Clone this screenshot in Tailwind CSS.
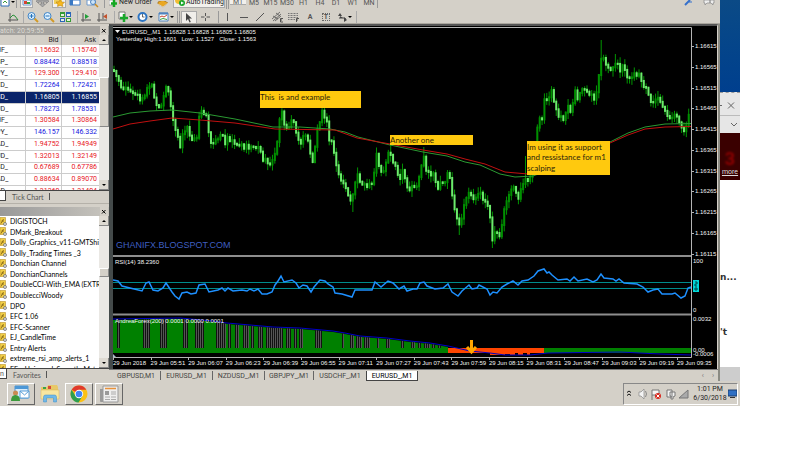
<!DOCTYPE html>
<html lang="en">

<head>
	<meta charset="UTF-8">
	<meta name="viewport" content="width=device-width, initial-scale=1.0">
	<title>EURUSD_,M1</title>
	<script src="https://cdn.jsdelivr.net/npm/@tailwindcss/browser@4"></script>
</head>

<body class="bg-white pr-[60px] font-['Roboto','Liberation_Sans',sans-serif] text-[7px] leading-[10px] text-[#222]">
	<div class="flex">
		<!-- TERMINAL WINDOW -->
		<div class="flex-1 min-w-0 bg-[#d4d0c8]">
			<header class="h-6 overflow-hidden border-b border-[#aaa69e]">
				<!-- standard toolbar -->
				<div class="flex h-[10px] items-start leading-[4px] whitespace-nowrap">
					<button aria-label="New chart" class="w-4"><svg class="w-4 h-2" viewBox="0 0 16 8"><path d="M1 0v6h8V0" fill="#fff" stroke="#2d6db8" /><path d="M3 3l2-2 2 2" stroke="#3a9a3a" fill="none" /><path d="M11 1h4l-2 2z" /></svg></button>
					<span class="w-1 h-2 border-l border-[#999]"></span>
					<button aria-label="Market watch" class="w-[13px] h-2 bg-[#f2f0ec] border border-[#aaa] border-t-0"><svg class="w-3 h-[7px]" viewBox="0 0 12 7"><path d="M2 0h8v5H2z" fill="#fff" stroke="#6a93c8" /><path d="M3 1h3v3H3z" fill="#d8432e" /><path d="M6 2h3v2H6z" fill="#35a043" /></svg></button>
					<button aria-label="Data window" class="w-[19px] h-2"><svg class="w-[19px] h-2" viewBox="0 0 19 8"><path d="M9.500 7L6.500 4h2V2h-3v1.500L3 1l2-1h9l2 1-2.500 2.500V2h-3v2h2z" fill="#aaa" stroke="#777" stroke-width=".6" /></svg></button>
					<button aria-label="Navigator" class="w-[14px] h-2 bg-[#f2f0ec] border border-[#aaa] border-t-0"><svg class="w-3 h-[7px]" viewBox="0 0 12 7"><path d="M1 0h8v4H1z" fill="#f1cf5a" /><path d="M7 0l1.500 2 3 .2-2 2 .4 2.300L7 5.500 4.500 6.500l.3-2.300L3 2l3-.2z" fill="#f8b81e" stroke="#ad7c10" stroke-width=".5" /></svg></button>
					<button aria-label="Terminal" class="w-[18px] h-2"><svg class="w-[18px] h-2" viewBox="0 0 18 8"><path d="M4 0h10v5H4z" fill="#fff" stroke="#3a79c4" /><path d="M4 0h3v5H4z" fill="#3a79c4" /></svg></button>
					<button aria-label="Strategy tester" class="w-4 h-2"><svg class="w-4 h-2" viewBox="0 0 16 8"><path d="M3 0h8v5H3z" fill="#fff" stroke="#6d98cc" /><circle cx="9" cy="2" r="2.500" fill="#cce4f8" stroke="#4a82c0" /><path d="M11 4l3 3" stroke="#c98b22" stroke-width="1.500" /></svg></button>
					<span class="w-[5px] ml-1 h-2 border-l border-[#999]"></span>
					<button class="flex w-12 text-[7px]"><svg class="w-[9px] h-2 mr-px shrink-0" viewBox="0 0 9 8"><path d="M0 0h5v5H0z" fill="#fff" stroke="#666" stroke-width=".5" /><path d="M5 0v7M2 3.500h6" stroke="#14a822" stroke-width="2.500" /></svg>New Order</button>
					<button aria-label="MetaEditor" class="w-[12px] h-2"><svg class="w-3 h-[7px]" viewBox="0 0 12 7"><path d="M1 1l5-2 5 3-5 4-5-3z" fill="#e9a722" stroke="#92600a" stroke-width=".6" /><path d="M1 3l5 3 5-4" fill="none" stroke="#fff" stroke-width=".6" /></svg></button>
					<button class="flex w-[52px] h-2 pl-px ml-1 text-[7px] bg-[#f2f0ec] border border-t-0 border-[#aaa]"><svg class="w-[10px] h-[7px] mr-px shrink-0" viewBox="0 0 10 7"><circle cx="4" cy="0" r="4" fill="#f0bd34" /><circle cx="7" cy="3" r="3" fill="#19a52b" /><path d="M6 1.500l3 1.500-3 1.500z" fill="#fff" /></svg>AutoTrading</button>
					<span class="w-[3px] h-[9px] ml-px mr-px border-x border-[#999]"></span>
					<nav class="flex text-[#555]">
						<button class="w-4 h-[5px] bg-[#f2f0ec] border-b border-[#aaa]">M1</button>
						<button class="w-4">M5</button>
						<button class="w-[17px]">M15</button>
						<button class="w-4">M30</button>
						<button class="w-[17px]">H1</button>
						<button class="w-4">H4</button>
						<button class="w-4">D1</button>
						<button class="w-[17px]">W1</button>
						<button class="w-4">MN</button>
					</nav>
					<span class="h-2 border-l border-[#999]"></span>
					<span class="flex ml-auto mr-[5px] gap-2">
						<svg class="w-3 h-2" viewBox="0 0 12 8"><path d="M2 5l5-5" stroke="#3470cc" stroke-width="2" /><path d="M6 2h3" stroke="#3470cc" /></svg>
						<svg class="w-3 h-2" viewBox="0 0 12 8"><path d="M1 0h6v3H4L2 5V3H1zM7 0h4v3h-1v2L8 3H7z" fill="#eee" stroke="#888" stroke-width=".7" /></svg>
					</span>
				</div>
				<!-- charts and line studies toolbar -->
				<div class="flex h-[14px] items-center pl-[5px]">
					<button aria-label="Line chart" class="w-4"><svg class="size-4" viewBox="0 0 16 16"><path d="M5 4v9M3 11h10" stroke="#555" /><path d="M5 9l3-3 2 1 3 4" stroke="#289238" fill="none" /></svg></button>
					<span class="w-[3px] h-3 border-r border-[#aaa]"></span>
					<button aria-label="Zoom in" class="w-4"><svg class="size-4" viewBox="0 0 16 16"><path d="M10 9l4 4" stroke="#d39a25" stroke-width="2" /><circle cx="7.500" cy="7" r="3.500" fill="#dcf0ff" stroke="#3f84c6" /><path d="M5.500 7h4M7.500 5v4" stroke="#2672b8" /></svg></button>
					<button aria-label="Zoom out" class="w-[17px]"><svg class="size-4" viewBox="0 0 16 16"><path d="M10 9l4 4" stroke="#d39a25" stroke-width="2" /><circle cx="7.500" cy="7" r="3.500" fill="#dcf0ff" stroke="#3f84c6" /><path d="M5.500 7h4" stroke="#2672b8" /></svg></button>
					<button aria-label="Tile windows" class="w-4"><svg class="size-4" viewBox="0 0 16 16"><path d="M3 3h5v5H3zM9 9h5v4H9z" fill="#359b35" /><path d="M9 3h5v5H9zM3 9h5v4H3z" fill="#2b66b8" /><path d="M4 5h3v2H4zM10 5h3v2h-3zM4 10h3v2H4zM10 10h3v2h-3z" fill="#e8f0e0" /></svg></button>
					<span class="w-[5px] h-3 border-r border-[#aaa]"></span>
					<button aria-label="Auto scroll" class="w-4"><svg class="size-4" viewBox="0 0 16 16"><path d="M5 4v9M3 11h10" stroke="#555" /><path d="M7 5l4 2.500L7 10z" fill="#21a038" /></svg></button>
					<button aria-label="Chart shift" class="w-4"><svg class="size-4" viewBox="0 0 16 16"><path d="M5 4v9M3 11h10M9 4v6" stroke="#555" /><path d="M13 5l-4 2.500L13 10z" fill="#c4532d" /></svg></button>
					<span class="w-[5px] h-3 border-r border-[#aaa]"></span>
					<button aria-label="Indicators" class="w-5"><svg class="w-5 h-4" viewBox="0 0 20 16"><path d="M4 3h6v7H4z" fill="#fff" stroke="#777" /><path d="M9 5v8M5 9h8" stroke="#18a82b" stroke-width="2.500" /><path d="M14 7h4l-2 2z" /></svg></button>
					<button aria-label="Periods" class="w-5"><svg class="w-5 h-4" viewBox="0 0 20 16"><circle cx="7.500" cy="8" r="4" fill="#fff" stroke="#2c74c2" stroke-width="2" /><path d="M7.500 5v3h2" fill="none" stroke="#444" stroke-width=".8" /><path d="M14 7h4l-2 2z" /></svg></button>
					<button aria-label="Templates" class="w-5"><svg class="w-5 h-4" viewBox="0 0 20 16"><path d="M4 4h9v8H4z" fill="#fff" stroke="#4e83be" /><path d="M4 4.500h9" stroke="#4e83be" stroke-width="2" /><path d="M5 8l2-1 2 1 3-2" stroke="#c4482f" fill="none" /><path d="M5 10.500l3-1 4 1" stroke="#35a043" fill="none" /><path d="M15 7h4l-2 2z" /></svg></button>
					<span class="w-[3px] h-3 ml-[2px] mr-px border-x border-[#999]"></span>
					<button aria-label="Cursor" class="w-4 h-[13px] bg-[#f0eeea] border border-[#aaa]"><svg class="w-[14px] h-3" viewBox="0 0 14 12"><path d="M4 1v8l2-2 1.500 3.500 1.300-.6L7.300 6.500H10z" fill="#444" /></svg></button>
					<button aria-label="Crosshair" class="w-[17px]"><svg class="w-[17px] h-4" viewBox="0 0 17 16"><path d="M8.500 4v3M8.500 9v3M4 8h3.500M9.500 8H13" stroke="#555" /></svg></button>
					<span class="w-[5px] h-3 mr-px border-r border-[#999]"></span>
					<button aria-label="Vertical line" class="w-4"><svg class="size-4" viewBox="0 0 16 16"><path d="M7.500 4v8" stroke="#555" /></svg></button>
					<button aria-label="Horizontal line" class="w-4"><svg class="size-4" viewBox="0 0 16 16"><path d="M4 8.500h8" stroke="#555" /></svg></button>
					<button aria-label="Trend line" class="w-[17px]"><svg class="size-4" viewBox="0 0 16 16"><path d="M4 12l8-8" stroke="#555" /></svg></button>
					<button aria-label="Channel" class="w-4"><svg class="size-4" viewBox="0 0 16 16"><path d="M3 10l8-7M4 12l8-7M6 12l6-5M4 7l5 3M7 4l4 3" stroke="#555" stroke-width=".8" /><path d="M14 9.500h-2.500v3.500H14M11.500 11H13" stroke="#333" fill="none" stroke-width=".8" /></svg></button>
					<button aria-label="Fibonacci" class="w-[17px]"><svg class="size-4" viewBox="0 0 16 16"><path d="M3 4.500h10M3 6.500h10M3 8.500h10M3 10.500h7" stroke="#777" stroke-dasharray="1 .5" /><path d="M11.500 13v-3.500H14M11.500 11H13" stroke="#333" fill="none" stroke-width=".8" /></svg></button>
					<button aria-label="Text" class="w-4 font-bold text-[#555]">A</button>
					<button aria-label="Text label" class="w-4 flex justify-center"><span class="w-2 h-2 border border-dotted border-[#666] leading-[6px] font-bold text-[#555]">T</span></button>
					<button aria-label="Arrows" class="w-5"><svg class="w-5 h-4" viewBox="0 0 20 16"><path d="M6 4l2 3H4zM6 7v2h3M10 8v5l3-2z" fill="#444" /><path d="M5 9h5l2 1" stroke="#444" fill="none" /><path d="M14 7h4l-2 2z" /></svg></button>
					<span class="w-px h-3 ml-[2px] bg-[#aaa]"></span>
				</div>
			</header>

			<div class="flex">
				<!-- SIDE PANELS -->
				<aside class="w-[109px] shrink-0">
					<section>
						<h2 class="h-[9px] mt-[2px] flex justify-between items-center bg-[#a5a39f] text-[#dedbd4] overflow-hidden whitespace-nowrap">
							<span>atch: 20:59:55</span>
							<button aria-label="Close market watch" class="w-2 bg-[#d4d0c8] mr-px"><svg class="w-2 h-[9px]" viewBox="0 0 8 9"><path d="M2 3l3.500 3.500M5.500 3L2 6.500" stroke="#000" /></svg></button>
						</h2>
						<div class="flex h-[156px] border-b border-[#444]">
							<div class="flex-1 overflow-hidden bg-white">
								<table class="w-full h-[163px] table-fixed leading-[9px]">
									<thead class="bg-[#d4d0c8]">
										<tr class="h-[10px] text-right">
											<th class="w-[25px]"><span class="sr-only">Symbol</span></th>
											<th class="w-9 pr-[2px] font-normal border-l border-[#aaa]">Bid</th>
											<th class="pr-[3px] font-normal border-l border-[#aaa]">Ask</th>
										</tr>
									</thead>
									<tbody id="quotes"></tbody>
								</table>
							</div>
							<div class="w-[10px] flex flex-col justify-between bg-[#eae8e4]">
								<svg class="w-[10px] h-[10px]" viewBox="0 0 10 10"><path d="M0 0h10v10H0z" fill="#888" /><path d="M0 0h9v9H0z" fill="#dedad2" /><path d="M3 6h4L5 4z" /></svg>
								<span class="h-[50px] mt-8 bg-[#d4d0c8] border border-l-white border-t-white border-r-[#888] border-b-[#888]"></span>
								<svg class="w-[10px] h-[10px] mt-auto" viewBox="0 0 10 10"><path d="M0 0h10v10H0z" fill="#888" /><path d="M0 0h9v9H0z" fill="#dedad2" /><path d="M3 4h4L5 6z" /></svg>
							</div>
						</div>
						<nav class="flex h-[11px] text-[#555]">
							<button class="w-[6px] h-[10px] mr-[6px] bg-white border-r border-b border-[#444]" aria-label="Symbols"></button>
							<button class="font-['Lato']">Tick Chart</button>
							<span class="h-[7px] mt-[2px] ml-[5px] w-px bg-[#555]"></span>
						</nav>
					</section>

					<section class="pt-[3px] mt-px border-t border-[#b5b1a9]">
						<h2 class="h-[9px] flex justify-end items-center bg-linear-to-r from-[#999] to-[#c8c5be]">
							<button aria-label="Close navigator" class="w-2 h-[9px] bg-[#d4d0c8] mr-px"><svg class="w-2 h-[9px]" viewBox="0 0 8 9"><path d="M2 3l3.500 3.500M5.500 3L2 6.500" stroke="#000" /></svg></button>
						</h2>
						<div class="flex h-[153px] border-b border-[#444]">
							<ul id="indicators" class="flex-1 min-w-0 h-[152px] overflow-hidden bg-white font-['Lato'] text-black"></ul>
							<div class="w-[10px] flex flex-col bg-[#eae8e4]">
								<svg class="w-[10px] h-[10px]" viewBox="0 0 10 10"><path d="M0 0h10v10H0z" fill="#888" /><path d="M0 0h9v9H0z" fill="#dedad2" /><path d="M3 6h4L5 4z" /></svg>
								<span class="h-[9px] mt-[42px] bg-[#d4d0c8] border border-l-white border-t-white border-r-[#888] border-b-[#888]"></span>
								<svg class="w-[10px] h-[10px] mt-auto" viewBox="0 0 10 10"><path d="M0 0h10v10H0z" fill="#888" /><path d="M0 0h9v9H0z" fill="#dedad2" /><path d="M3 4h4L5 6z" /></svg>
							</div>
						</div>
						<nav class="flex h-3 text-[#555]">
							<button class="w-[7px] h-[10px] mr-[6px] bg-white border-r border-b border-[#444] text-left">n</button>
							<button class="font-['Lato']">Favorites</button>
							<span class="h-[7px] mt-[2px] ml-[5px] w-px bg-[#555]"></span>
						</nav>
					</section>
				</aside>

				<!-- CHART -->
				<main class="flex-1 min-w-0 border-r-2 border-[#8b8b83]">
					<div class="border-l-4 border-r border-t-2 border-l-[#444a4a] border-r-[#d4d0c8] border-t-[#555] bg-black">
						<svg id="chart" class="block w-full h-auto font-['Liberation_Sans'] text-[6px]" viewBox="113 26 604 343" fill="#f4f4f4">
							<path d="M113 27.500h578.500v330M113 357.500h578.500" fill="none" stroke="#b4b4b4" />
							<path d="M113 256h578M113 314.500h578" stroke="#8e8e8e" stroke-width="2" />
							<text x="116" y="248" class="text-[9px]" fill="#3f5fc0">GHANIFX.BLOGSPOT.COM</text>
							<g id="candles"></g>
							<path d="M113 117L130 113 150 111 172 110 200 113 235 119 273 127 300 127 330 129 345 132 358 137 390 145 423 152 447 156 465 162 480 165 500 174 515 177 533 176 570 162 610 142 628 133 645 127 665 124 691 123.500" fill="none" stroke="#2a9a32" />
							<path d="M113 129L130 124 150 121 172 118 200 120 235 123 275 129 335 130 357 138 390 144 423 150 447 154 465 159 485 164 505 172 528 174 570 164 610 143 628 135 645 129 665 127 691 126.500" fill="none" stroke="#c01010" />
							<path d="M115 30h5l-2.500 3z" />
							<text x="122" y="34">EURUSD_,M1&#160; 1.16828 1.16828 1.16805 1.16805</text>
							<text x="116" y="41">Yesterday High:1.1601&#160;&#160; Low: 1.1527&#160;&#160; Close: 1.1563</text>
							<!-- notes -->
							<g class="font-['Lato'] text-[8px]">
								<path d="M260 91h101v17H260zM390 135h83v10h-83zM527 141h83v34h-83z" fill="#ffc90e" />
								<g fill="#2c240a">
									<text x="260" y="100">This&#160; is and example</text>
									<text x="390" y="143">Another one</text>
									<text x="527" y="150">Im using it as support</text>
									<text x="527" y="160">and ressistance for m1</text>
									<text x="527" y="171">scalping</text>
								</g>
							</g>
							<!-- RSI window -->
							<path d="M113 282.500h578M113 288.500h578" stroke="#008b8b" />
							<polyline fill="none" stroke="#1e90ff" stroke-width="1.500" points="113,280 118,281 122,286 130,288 142,291 146,283 149,282 153,290 158,291 163,288 166,283 172,292 175,296 179,299 182,293 187,292 191,294 196,293 199,285 205,284 209,292 218,290 222,288 225,291 228,288 233,291 242,290 247,291 250,289 254,291 258,289 262,294 267,294 272,292 275,285 278,281 281,276 284,282 292,280 296,283 299,288 303,285 307,286 311,292 314,287 320,280 325,281 328,284 333,287 335,293 342,294 352,297 355,290 372,290 375,282 381,287 388,281 393,283 399,289 404,286 407,291 413,289 417,289 420,283 424,282 427,286 435,289 443,288 448,284 452,292 458,296 462,291 469,285 472,289 477,288 479,285 487,289 490,295 493,292 497,293 502,287 507,284 513,281 518,285 522,281 528,280 534,276 538,271 544,269 547,273 549,272 552,275 558,280 567,279 570,281 574,277 578,281 587,279 593,282 597,280 601,274 604,278 613,279 616,281 619,279 624,283 637,284 643,287 648,292 653,290 658,289 662,294 672,294 675,293 681,298 685,296 688,288 691,287" />
							<text x="115" y="264">RSI(14) 38.2360</text>
							<text x="693" y="263">100</text>
							<text x="693" y="312">0</text>
							<path d="M693 280h6v12h-6z" fill="#00d8d8" />
							<path d="M695 282h2v2h-2v2h2M695 288h2v2h-2z" fill="none" stroke="#044" />
							<!-- force window -->
							<path d="M113 320L180 319 213 322 227 324 250 326 273 328 300 329 333 332 345 334 360 337 387 339 410 342 430 344 448 347V353H113z" fill="#008000" />
							<g id="bars"></g>
							<path d="M544 348h147v5H544z" fill="#008000" />
							<path d="M448 348h96v5h-14v2h-3v-2h-4v2h-5v-2h-3v2h-5v-1h-5v1h-15v-2h-42z" fill="#ff4500" />
							<polyline fill="none" stroke="#0000c8" points="113,319 180,318 213,321 227,323 250,325 273,327 300,328 333,331 345,333 360,336 387,338 410,341 430,343 448,346 470,351 490,353 505,355 530,355 548,353 620,352 660,354 691,355" />
							<path d="M471.500 340v12M467 347l4.500 5 4.500-5" fill="none" stroke="#ffa500" stroke-width="3" />
							<text x="115" y="323">AndreaForex(200) 0.0001 0.0000 0.0001</text>
							<text x="693" y="321">0.0032</text>
							<text x="693" y="352">0.00</text>
							<text x="693" y="356">-0.0006</text>
							<path d="M113 354l3 3h-3z" fill="#a8b8c8" />
							<g id="axes"></g>
						</svg>
					</div>
					<nav class="flex h-3 pt-px pl-[3px] border-t border-[#777] text-[#444] text-center whitespace-nowrap">
						<button class="w-[49px] h-[9px] border-r border-[#666]">GBPUSD,M1</button>
						<button class="w-[52px] h-[9px] border-r border-[#666]">EURUSD_,M1</button>
						<button class="w-[52px] h-[9px] border-r border-[#666]">NZDUSD_,M1</button>
						<button class="w-[49px] h-[9px] border-r border-[#666]">GBPJPY_,M1</button>
						<button class="w-[52px] h-[9px]">USDCHF_,M1</button>
						<button class="w-[52px] h-[10px] bg-white border-x border-b border-[#444] text-black">EURUSD_,M1</button>
						<span class="ml-auto mr-1 flex gap-2 text-[#777]"><button aria-label="Scroll tabs left">‹</button><button aria-label="Scroll tabs right">›</button></span>
					</nav>
				</main>
			</div>
		</div>

		<!-- WINDOWS BEHIND -->
		<div class="w-5 shrink-0 flex flex-col overflow-hidden">
			<div class="h-[92px] bg-linear-to-b from-[#0b4a86] to-[#003f8e]"></div>
			<div class="h-[41px] bg-[#e6e6e6] border-t border-dashed border-[#999]">
				<svg class="w-5 h-10" viewBox="0 0 20 40"><path d="M0 12.500h2M8 9.500l6 6M14 9.500l-6 6M11 30l3 3 3-3" fill="none" stroke="#666" /><path d="M0 22.500h20" stroke="#bbb" /></svg>
			</div>
			<div class="h-[47px] bg-[#3a0000] flex flex-col items-center">
				<span class="mt-[18px] text-lg leading-4 font-bold text-[#8c0000] blur-[1px]">3</span>
				<a href="#" class="text-[#ddd] underline">more</a>
			</div>
			<div class="flex-1 font-bold text-[9px] text-[#333] bg-white font-['DejaVu_Sans']">
				<p class="mt-[92px]">n...</p>
				<p class="mt-[45px]">'t</p>
			</div>
			<div class="h-[14px] bg-[#cdcdcd]"></div>
		</div>
	</div>

	<!-- TASKBAR -->
	<footer class="flex h-[25px] pl-[7px] items-center bg-[#d4d0c8]">
		<button aria-label="Messenger" class="w-7 h-[22px] flex justify-center items-center border border-l-white border-t-white border-r-[#666] border-b-[#666]">
			<svg class="w-5 h-[18px]" viewBox="0 0 20 18"><path d="M4 1h13v12H4z" fill="#d8ecfb" stroke="#4c97d6" /><path d="M4 1h13v3H4z" fill="#4c97d6" /><path d="M9 6h9v7H9z" fill="#fff" stroke="#5a9fd8" /><path d="M9 6l4.500 4L18 6" fill="none" stroke="#5a9fd8" /><circle cx="4.500" cy="8" r="2.500" fill="#c98a52" /><path d="M0 16q0-6 4.500-6T9 16z" fill="#3c9a3c" /></svg>
		</button>
		<button aria-label="Explorer" class="w-[30px] flex justify-center">
			<svg class="w-5 h-[19px]" viewBox="0 0 20 19"><path d="M1 3h6l1-2h9l1 2v12H1z" fill="#e8c868" /><path d="M3 3h3v2H3z" fill="#39a34a" /><path d="M8 2h3v3H8z" fill="#d64a3a" /><path d="M1 6h18v9H1z" fill="#f8e6a0" stroke="#d8b65a" stroke-width=".5" /><path d="M3.500 18v-5q0-2 2-2h9q2 0 2 2v5h-3v-4h-7v4z" fill="#6fb9e8" stroke="#3f8cc8" stroke-width=".5" /></svg>
		</button>
		<button aria-label="Chrome" class="w-7 h-[22px] flex justify-center items-center border border-l-white border-t-white border-r-[#666] border-b-[#666]">
			<svg class="w-[18px] h-[18px]" viewBox="0 0 18 18"><circle cx="9" cy="9" r="8.500" fill="#fbc116" /><path d="M9 9L1.600 4.800A8.500 8.500 0 0 1 16.400 4.800H9z" fill="#e0392c" /><path d="M1.600 4.800A8.500 8.500 0 0 0 8.500 17.500L12.500 11 9 9 5.600 11z" fill="#2e9e4f" /><circle cx="9" cy="9" r="4.200" fill="#fff" /><circle cx="9" cy="9" r="3.300" fill="#4285f4" /></svg>
		</button>
		<button aria-label="News" class="w-7 h-[22px] ml-[2px] flex justify-center items-center border border-l-white border-t-white border-r-[#666] border-b-[#666]">
			<svg class="w-5 h-[18px]" viewBox="0 0 20 18"><path d="M1 4h4v13H2q-1 0-1-1z" fill="#999" /><path d="M4 1h15v16H4z" fill="#eee" stroke="#999" /><path d="M6 3.500h11" stroke="#e8923a" stroke-width="1.500" /><path d="M6 6h4v4H6z" fill="#999" /><path d="M12 7h5M12 9h5M6 12h5M12 12h5M6 14.500h5M12 14.500h5" stroke="#aaa" /></svg>
		</button>
		<div class="flex ml-auto mr-[2px] h-[22px] w-[115px] items-center border border-t-[#888] border-l-[#888] border-r-white border-b-white">
			<svg class="w-[68px] h-[14px] shrink-0" viewBox="0 0 68 14"><path d="M3 5.500L5 4l2 1.500M3 8.500L5 7l2 1.500" fill="none" stroke="#111" /><path d="M15 5h2l3-3v10l-3-3h-2z" fill="#f4f4f4" stroke="#888" stroke-width=".7" /><path d="M21.500 4q2 3 0 6" fill="none" stroke="#888" /><path d="M28 3v10M28 3h7v5h-7" fill="#f4f4f4" stroke="#777" /><circle cx="34" cy="9" r="3" fill="#d8281e" /><path d="M32.500 7.500l3 3M35.500 7.500l-3 3" stroke="#fff" /><path d="M43 3h5v7h-5zM46 5h5v4l-2 1v2h-2v-3h-1z" fill="#f4f4f4" stroke="#777" /><path d="M55 11l9-8v8z" fill="#aaa" stroke="#777" /></svg>
			<div class="w-9 text-center leading-[9px]">
				<div>1:01 PM</div>
				<div>6/30/2018</div>
			</div>
			<svg class="w-[9px] h-[9px] shrink-0" viewBox="0 0 9 9"><path d="M0 1h9v6H0z" fill="#2f70c4" stroke="#1d3f70" /><path d="M2 8.500h5" stroke="#333" /></svg>
		</div>
	</footer>

	<script>
		const quotes = [
			['HF_', '1.15632', '1.15740', 0], ['BP_', '0.88442', '0.88518', 1], ['PY_', '129.300', '129.410', 0],
			['ZD_', '1.72264', '1.72421', 1], ['SD_', '1.16805', '1.16855', 2], ['UD_', '1.78273', '1.78531', 1],
			['HF_', '1.30584', '1.30864', 0], ['PY_', '146.157', '146.332', 1], ['AD_', '1.94752', '1.94949', 0],
			['UD_', '1.32013', '1.32149', 0], ['SD_', '0.67689', '0.67786', 0], ['AD_', '0.88634', '0.89070', 0],
			['AD_', '1.31260', '1.31404', 0],
		];
		const tones = ['text-[#e8141c]', 'text-[#1414e0]', 'text-white bg-[#0a246a]'];
		document.getElementById('quotes').innerHTML = quotes.map(([s, bid, ask, t]) => `
			<tr class="border-b border-[#ccc] text-right ${tones[t]}">
				<td class="text-left ${t === 2 ? '' : 'text-[#222]'}"><span class="-ml-1">${s}</span></td>
				<td class="pr-px border-l border-[#ccc]">${bid}</td>
				<td class="pr-[2px] border-l border-[#ccc]">${ask}</td>
			</tr>`).join('');

		const names = ['DIGISTOCH', 'DMark_Breakout', 'Dolly_Graphics_v11-GMTShift', 'Dolly_Trading Times _3',
			'Donchian Channel', 'DonchianChannels', 'DoubleCCI-With_EMA (EXTRA E', 'DoublecciWoody', 'DPO', 'EFC 1.06',
			'EFC-Scanner', 'EJ_CandleTime', 'Entry Alerts', 'extreme_rsi_amp_alerts_1', 'EEa_Universal_Smooth_Mst'];
		document.getElementById('indicators').innerHTML = `<div class="grid h-[158px] auto-rows-fr">` + names.map(n => `
			<li class="flex items-center gap-[3px] min-h-0 whitespace-nowrap">
				<svg class="w-[7px] h-[9px] shrink-0" viewBox="0 0 7 9"><path d="M0 .500h5.500v7H0z" fill="#f2cf48" stroke="#b8922a" stroke-width=".6"/><path d="M1 6.500l2.500-4.500M1.500 4h2.500" stroke="#7a5a10" stroke-width=".8"/><circle cx="5" cy="7" r="1.500" fill="#ddd" stroke="#666" stroke-width=".7"/></svg>${n}
			</li>`).join('') + '</div>';

		// price path as x,y pairs; candles are sampled along it
		const path = [113,72,115,76,120,80,121,86,127,88,133,95,140,99,144,99,148,83,152,85,155,102,160,107,163,100,166,88,170,98,
			173,120,177,135,180,149,183,132,187,127,190,138,197,140,199,120,202,112,207,115,209,140,213,142,218,138,222,133,225,143,
			228,137,233,143,240,147,247,146,253,147,259,145,263,160,272,162,277,147,279,123,282,110,284,127,288,128,292,117,295,127,
			300,145,303,133,307,138,312,162,315,150,318,125,322,112,327,122,329,142,333,143,336,167,340,180,345,188,352,202,355,183,
			358,172,361,185,368,185,373,183,376,153,380,172,385,170,387,155,390,152,395,167,400,182,403,170,408,192,413,187,418,188,
			420,168,424,158,427,173,433,173,438,187,445,182,449,172,452,197,456,213,460,228,463,210,468,188,474,203,480,192,487,208,
			489,210,492,238,497,233,499,238,503,217,507,200,513,183,519,198,523,183,528,180,532,172,535,145,538,122,543,117,545,93,
			547,103,551,87,553,98,558,115,565,118,568,105,572,112,575,87,577,98,582,92,590,92,595,100,598,83,600,70,602,52,605,63,
			612,70,617,60,619,72,623,63,626,75,633,77,637,73,642,82,647,92,653,105,657,98,662,103,667,117,675,115,680,127,683,133,
			687,127,689,110,692,110];
		const priceAt = x => {
			let i = 0;
			while (i < path.length - 4 && path[i + 2] < x) i += 2;
			const t = (x - path[i]) / (path[i + 2] - path[i]);
			return path[i + 1] + t * (path[i + 3] - path[i + 1]);
		};
		const noise = n => { const v = Math.sin(n * 127.1) * 43758.5453; return v - Math.floor(v); };
		const spikes = { 601: 40, 390: 139, 424: 147, 526: 156, 492: 248, 352: 212, 460: 235, 615: 54, 690: 101 };
		const step = 2.365;
		let svg = '', prev = 70;
		for (let i = 0; i < 244; i++) {
			const x = 114 + i * step;
			const close = priceAt(x) + (noise(i) - .5) * 6;
			let top = Math.min(prev, close) - 1, bottom = Math.max(prev, close) + 1;
			let hi = top - noise(i + 500) * 6, lo = bottom + noise(i + 900) * 6;
			for (const k in spikes) {
				if (Math.abs(k - x) < step / 2) { hi = Math.min(hi, spikes[k]); lo = Math.max(lo, spikes[k]); }
			}
			const up = close < prev;
			svg += `<path d="M${x} ${hi}V${lo}" stroke="#009600"/><rect x="${x - 1}" y="${top}" width="2" height="${bottom - top}" fill="${up ? '#009000' : '#6ceb6c'}"/>`;
			prev = close;
		}
		document.getElementById('candles').innerHTML = svg;

		// gaps in the histogram: start, end
		const gaps = [[117,120],[143,150],[160,167],[183,188],[195,204],[216,226],[228,231],[235,239],[243,249],[251,254],[258,263],
			[266,283],[286,291],[294,297],[299,303],[315,322],[342,344],[350,354],[356,362],[364,370],[377,379],[386,390],[401,404],
			[411,415],[418,421],[424,430],[432,435],[438,441]];
		const curve = [113,320,180,319,213,322,227,324,250,326,273,328,300,329,333,332,345,334,360,337,387,339,410,342,430,344,448,347];
		const curveAt = x => { let i = 0; while (curve[i + 2] < x) i += 2; return curve[i + 1] + (x - curve[i]) / (curve[i + 2] - curve[i]) * (curve[i + 3] - curve[i + 1]); };
		document.getElementById('bars').innerHTML = gaps.map(([a, b]) => {
			let out = '';
			for (let x = a; x < b; x++) out += `<rect x="${x}" y="${curveAt(x)}" width="1" height="${348 - curveAt(x)}" fill="${(x - a) % 2 ? '#555' : '#111'}"/>`;
			return out;
		}).join('');

		const times = ['2018', '05:51', '06:07', '06:23', '06:39', '06:55', '07:11', '07:27', '07:43', '07:59', '08:15', '08:31', '08:47', '09:03', '09:19', '09:35'];
		let axes = times.map((t, i) => `<path d="M${Math.round(113 + i * 37.6)}.5 357v3" stroke="#b4b4b4"/><text x="${113 + i * 37.6}" y="365">29 Jun ${t}</text>`).join('');
		for (let i = 0; i < 11; i++) {
			const y = Math.round(46 + i * 20.75);
			axes += `<path d="M691 ${y}.5h3" stroke="#b4b4b4"/><text x="695" y="${y + 2}">${(1.16615 - i * .0005).toFixed(5)}</text>`;
		}
		document.getElementById('axes').innerHTML = axes;
	</script>
</body>

</html>
